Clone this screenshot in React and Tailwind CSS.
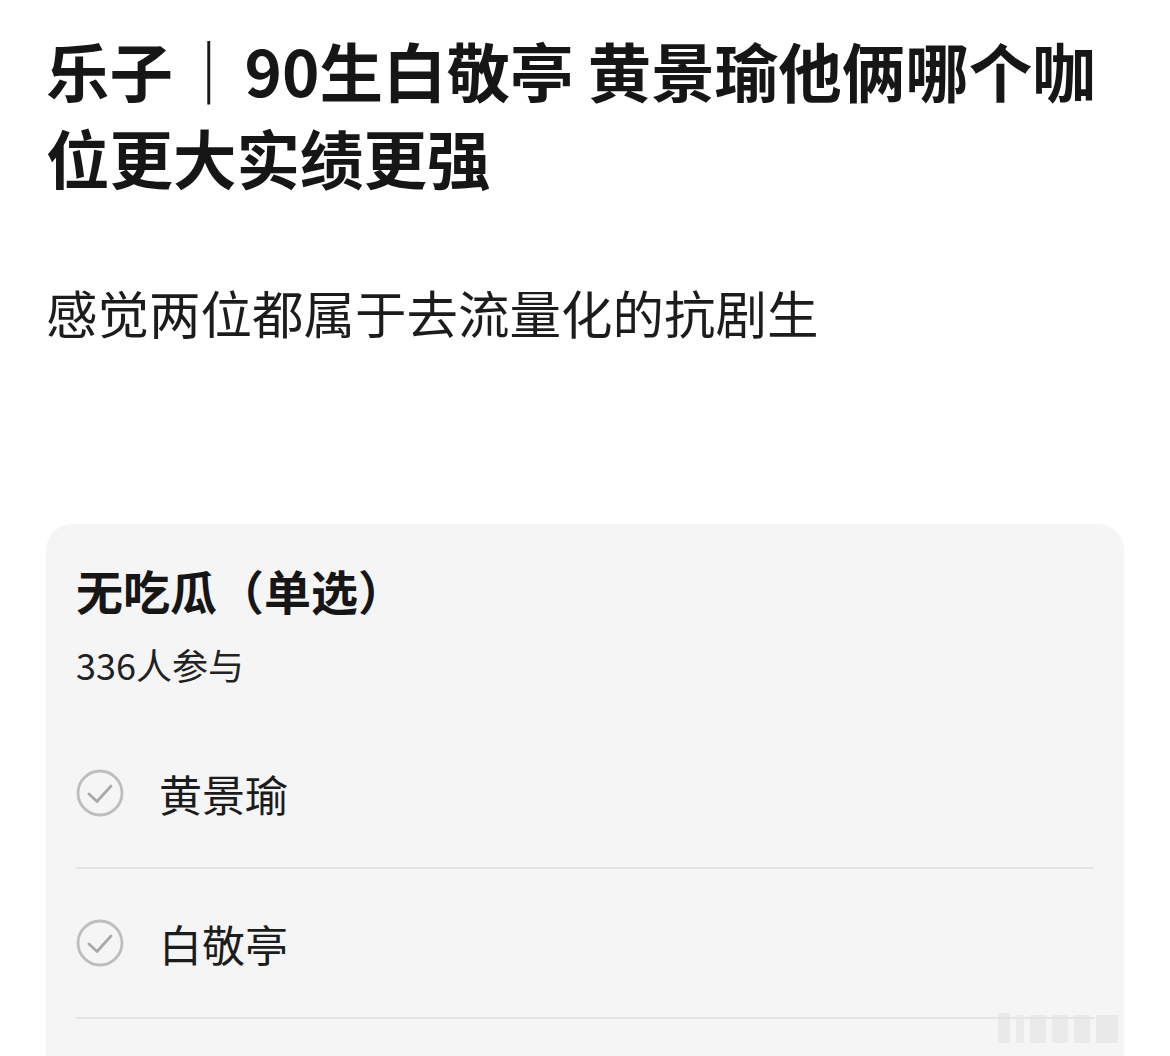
import React from "react";

function CheckCircle() {
  return (
    <svg width="48" height="48" viewBox="0 0 48 48" className="shrink-0">
      <circle cx="24" cy="24" r="22" fill="none" stroke="#bdbdbd" strokeWidth="2.8" />
      <path d="M13 25 L21 32.5 L35 17" fill="none" stroke="#a9a9a9" strokeWidth="2.8" strokeLinecap="round" strokeLinejoin="round" />
    </svg>
  );
}

function Option({ label }) {
  return (
    <div className="h-[150px] flex items-center border-b-2 border-[#e4e4e4]">
      <CheckCircle />
      <span className="ml-[35px] text-[43px] leading-[58px] text-[#1c1c1c]">{label}</span>
    </div>
  );
}

export default function App() {
  return (
    <div
      className="relative w-[1170px] h-[1056px] overflow-hidden bg-white text-[#161616]"
      style={{ fontFamily: '"Noto Sans CJK SC", "Noto Sans", sans-serif' }}
    >
      <div className="pl-[46px] pt-[26px]">
        <h1 className="text-[63.5px] leading-[87px] font-bold">
          <span className="block whitespace-nowrap">乐子<span className="mx-[4px]">｜</span>90生白敬亭 黄景瑜他俩哪个咖</span>
          <span className="block whitespace-nowrap">位更大实绩更强</span>
        </h1>
        <p className="mt-[76px] text-[51.5px] leading-[72px] text-[#1c1c1c]">感觉两位都属于去流量化的抗剧生</p>
      </div>

      <div className="mt-[176px] mx-[46px] rounded-[26px] bg-[#f5f5f5] px-[30px] pt-[35px] pb-[40px]">
        <div className="text-[47px] leading-[62px] font-bold">无吃瓜（单选）</div>
        <div className="mt-[18px] text-[36px] leading-[50px] text-[#222]">336人参与</div>
        <div className="mt-[30px]">
          <Option label="黄景瑜" />
          <Option label="白敬亭" />
          <div className="h-[150px]" />
        </div>
      </div>

      <div className="absolute left-[998px] top-[1013px] flex items-end gap-[6px] opacity-60">
        <div className="w-[12px] h-[30px] bg-[#e2e2e2] rounded-[2px]" />
        <div className="w-[8px] h-[28px] bg-[#e6e6e6]" />
        <div className="w-[16px] h-[28px] bg-[#e4e4e4]" />
        <div className="w-[16px] h-[28px] bg-[#e4e4e4]" />
        <div className="w-[16px] h-[28px] bg-[#e4e4e4]" />
        <div className="w-[22px] h-[28px] bg-[#e2e2e2]" />
      </div>
    </div>
  );
}
